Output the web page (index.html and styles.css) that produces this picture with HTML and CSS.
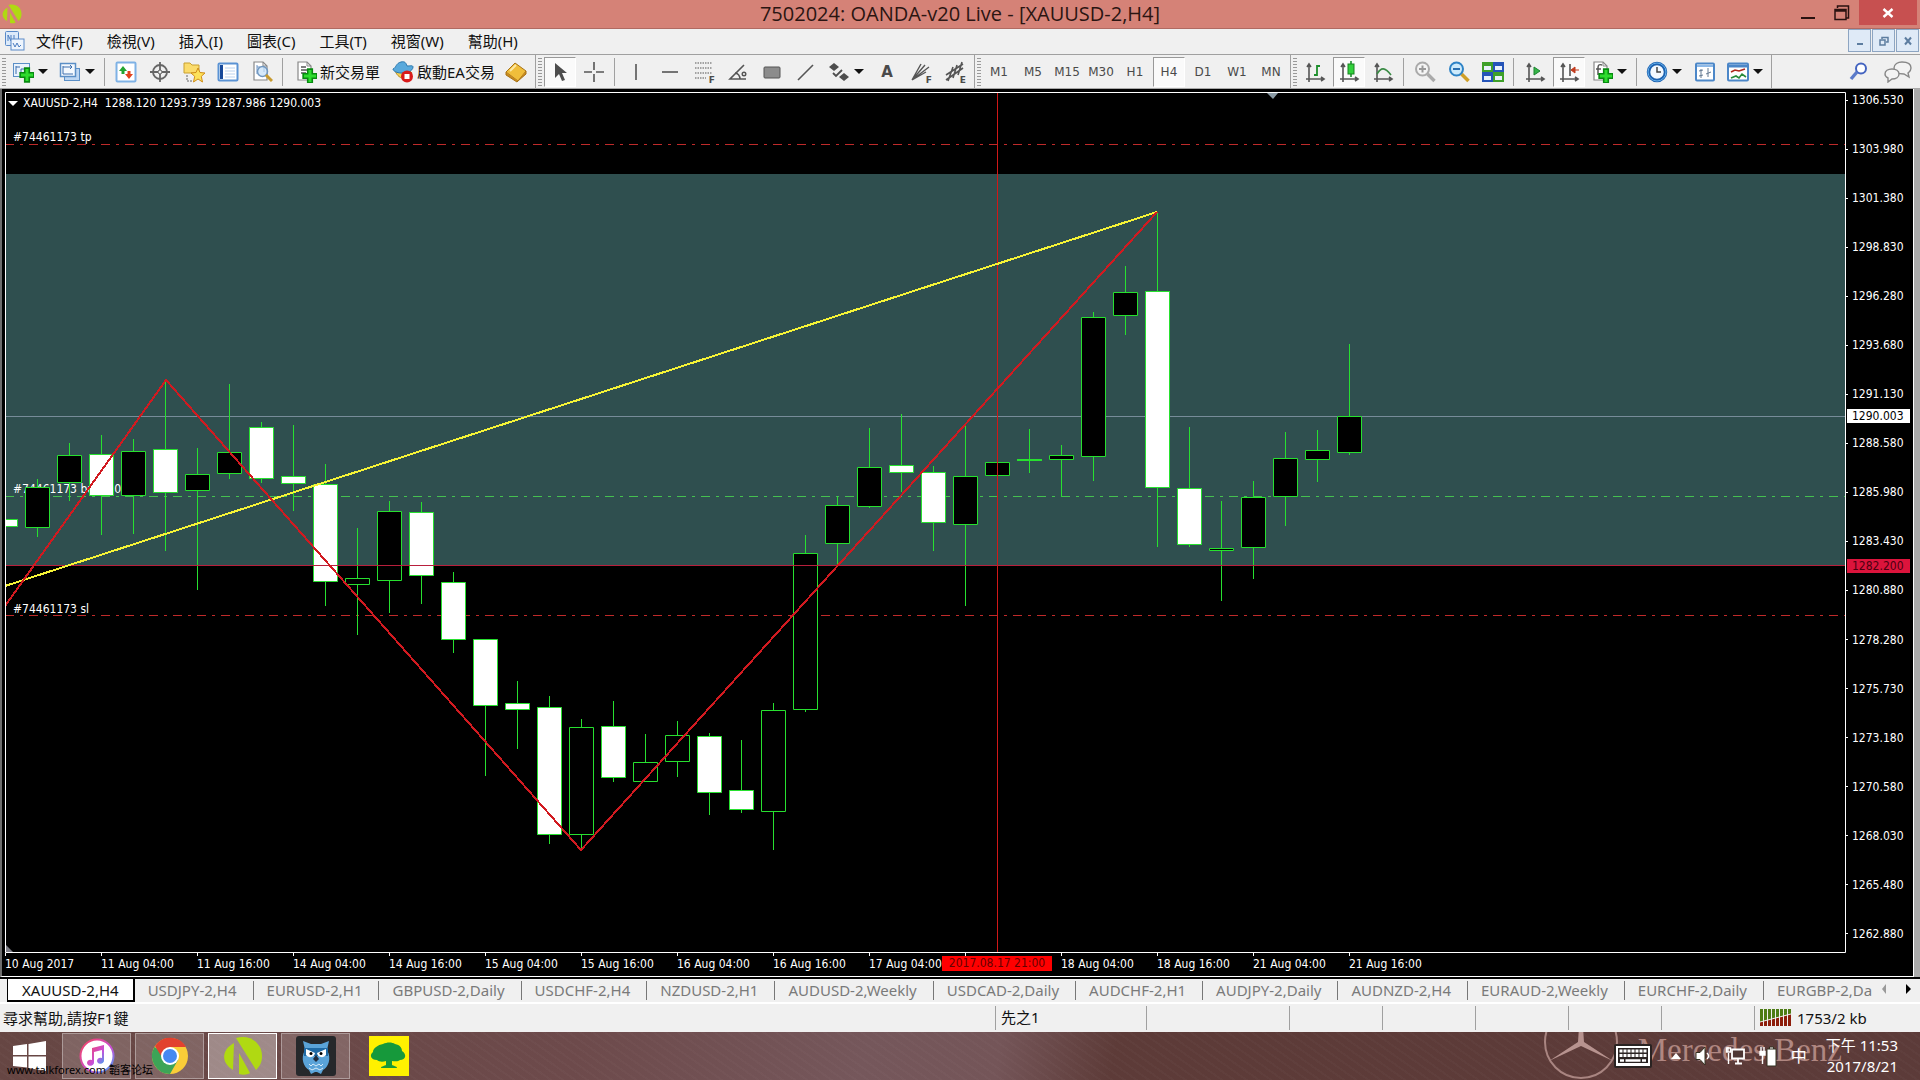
FILE: index.html
```html
<!DOCTYPE html>
<html lang="zh-Hant">
<head>
<meta charset="utf-8">
<title>7502024: OANDA-v20 Live - [XAUUSD-2,H4]</title>
<link rel="stylesheet" href="styles.css">
</head>
<body>
<svg class="defs" aria-hidden="true">
  <symbol id="n-logo" viewBox="0 0 40 40"><path d="M11 7C-2 14-2 27 10 34z" fill="#b0d912"/><path d="M13 2C27-2 39 7 39 20c0 6-2 10-6 14z" fill="#b0d912"/><path d="M16 17v21c4 1 8 1 11-1z" fill="#b0d912"/></symbol>
  <symbol id="plus" viewBox="0 0 14 14"><path d="M5 1h4v4h4v4H9v4H5V9H1V5h4z" fill="#2edc2e" stroke="#078a10" stroke-width="1.4"/></symbol>
  <symbol id="page" viewBox="0 0 22 22"><path d="M3 1h9l4 4v14H3z" fill="#fff" stroke="#888" stroke-width="1.2"/><path d="M12 1v4h4" fill="none" stroke="#888"/></symbol>
</svg>

<header class="titlebar">
  <svg class="app-logo" viewBox="0 0 40 40"><use href="#n-logo"/></svg>
  <h1 class="title">7502024: OANDA-v20 Live - [XAUUSD-2,H4]</h1>
  <div class="win-controls">
    <button class="win-btn" aria-label="最小化"><svg width="16" height="20"><path d="M1 15h14" stroke="#2a1210" stroke-width="2"/></svg></button>
    <button class="win-btn" aria-label="還原"><svg width="16" height="20"><path d="M1 6.500h11v10H1zM1 8h11M3.500 5V3h11v12H12" fill="none" stroke="#2a1210" stroke-width="1.500"/></svg></button>
    <button class="win-btn close" aria-label="關閉"><svg width="12" height="12"><path d="M1.500 2l9 8M10.500 2l-9 8" stroke="#fff" stroke-width="2.400"/></svg></button>
  </div>
</header>

<nav class="menubar">
  <svg class="menu-icon" viewBox="0 0 20 20"><rect x=".5" y=".5" width="13" height="14" rx="1" fill="#dceafa" stroke="#5a8ac8"/><path d="M3 10V4l3 6V4M9 4v6" stroke="#4a7cc0" fill="none"/><rect x="6" y="8" width="13" height="11" fill="#eef5fd" stroke="#5a8ac8"/><path d="M8 12l2 4 2-4 2 4 2-2" stroke="#4a7cc0" fill="none"/></svg>
  <button class="menu">文件(F)</button>
  <button class="menu">檢視(V)</button>
  <button class="menu">插入(I)</button>
  <button class="menu">圖表(C)</button>
  <button class="menu">工具(T)</button>
  <button class="menu">視窗(W)</button>
  <button class="menu">幫助(H)</button>
  <div class="mdi">
    <button class="mdi-btn" aria-label="最小化圖表"><svg width="12" height="12"><path d="M3 9h6" stroke="#5d7da0" stroke-width="2"/></svg></button>
    <button class="mdi-btn" aria-label="還原圖表"><svg width="12" height="12"><path d="M2 5h5v5H2zM4 4V2.500h6V7H8" fill="none" stroke="#5d7da0" stroke-width="1.500"/></svg></button>
    <button class="mdi-btn" aria-label="關閉圖表"><svg width="12" height="12"><path d="M3 2.500l6 7M9 2.500l-6 7" stroke="#5d7da0" stroke-width="2"/></svg></button>
  </div>
</nav>

<div class="toolbar">
  <div class="group">
    <i class="grip"></i>
    <button class="drop" aria-label="新圖表"><svg class="ico" viewBox="0 0 22 22"><rect x="1.500" y="2.500" width="16" height="13" fill="#eaf3fc" stroke="#5b8fc6"/><path d="M4 5v8M4 6h4M9 12v-4h4" stroke="#3c6fae" fill="none"/><use href="#plus" x="7" y="6" width="16" height="16"/></svg><i class="arr"></i></button>
    <button class="drop" aria-label="設定檔"><svg class="ico" viewBox="0 0 22 22"><rect x="5.500" y="7.500" width="15" height="12" fill="#bcd6f2" stroke="#5b8fc6"/><rect x="1.500" y="2.500" width="15" height="13" fill="#f4f9fe" stroke="#5b8fc6" stroke-width="1.500"/><path d="M4 5v8h10M4 6h9M11 4l2 2-2 2" stroke="#3c6fae" fill="none"/></svg><i class="arr"></i></button>
    <i class="sep"></i>
    <button class="tool" aria-label="市場報價"><svg class="ico" viewBox="0 0 22 22"><rect x="1.500" y="1.500" width="19" height="19" rx="1" fill="#fff" stroke="#7fb2e5" stroke-width="2"/><path d="M8 5l4 5H9.500v3h-3v-3H4z" fill="#23a531"/><path d="M14 18l-4-5h2.500v-3h3v3H18z" fill="#e2421d"/></svg></button>
    <button class="tool" aria-label="數據窗口"><svg class="ico" viewBox="0 0 22 22"><circle cx="11" cy="11" r="7" fill="none" stroke="#666" stroke-width="1.800"/><path d="M11 1v20M1 11h20" stroke="#666" stroke-width="1.800"/><circle cx="11" cy="11" r="2" fill="#f0f0f0" stroke="#666"/></svg></button>
    <button class="tool" aria-label="導航"><svg class="ico" viewBox="0 0 22 22"><path d="M1 2h6l2 2h7v8H1z" fill="#fbdc6c" stroke="#c9a031"/><path d="M4 14v6h5" stroke="#666" stroke-dasharray="2 1" fill="none"/><path d="M15 7l2 4.500 5 .5-3.700 3.300L19.500 21 15 18l-4.500 3 1.200-5.700L8 12l5-.5z" fill="#fde25a" stroke="#d08d18"/></svg></button>
    <button class="tool" aria-label="終端"><svg class="ico" viewBox="0 0 22 22"><rect x="1.500" y="2.500" width="19" height="17" rx="1" fill="#fff" stroke="#5b93d4" stroke-width="2"/><path d="M3 4h3v14H3z" fill="#17499a"/><path d="M8 7h10M8 10h10M8 13h10M8 16h10" stroke="#bcd3ee"/></svg></button>
    <button class="tool" aria-label="策略測試"><svg class="ico" viewBox="0 0 22 22"><use href="#page"/><path d="M6 4v9M6 6h3M13 5v6" stroke="#6e95c4" fill="none"/><circle cx="11.500" cy="10.500" r="5" fill="#c5dff8" fill-opacity=".7" stroke="#7097c0" stroke-width="1.500"/><path d="M15 14l6 6" stroke="#c79a2f" stroke-width="3"/></svg></button>
    <i class="sep"></i>
    <button class="wide"><svg class="ico" viewBox="0 0 22 22"><use href="#page"/><path d="M6 6h5M6 9h7M6 12h5" stroke="#555" stroke-width="1.500"/><use href="#plus" x="7" y="7" width="16" height="16"/></svg>新交易單</button>
    <button class="wide"><svg class="ico" viewBox="0 0 22 22"><path d="M3 9c2 9 13 12 17 3l-4-4z" fill="#f5cf52" stroke="#b68d24"/><path d="M1 8c3-1 3-6 8-7 4-1 5 1 6 4 3 0 6-1 6 1 0 4-7 7-12 6C5 12 1 10 1 8z" fill="#59a9dc" stroke="#2a77ad"/><circle cx="15" cy="15.500" r="6" fill="#d91b1b"/><rect x="12.500" y="13" width="5" height="5" fill="#fff"/></svg>啟動EA交易</button>
    <button class="tool" aria-label="MetaEditor"><svg class="ico" viewBox="0 0 22 22"><path d="M1 11L10 2l11 8-8 10z" fill="#f0be3b" stroke="#a87316"/><path d="M1 11v3l11 7 1-1M13 20l8-7v-3" fill="#c88a1d" stroke="#a87316"/><path d="M5 10l6-6" stroke="#fce9a6" stroke-width="2"/></svg></button>
  </div>
  <div class="group">
    <i class="grip"></i>
    <button class="tool on" aria-label="游標"><svg class="ico" viewBox="0 0 22 22"><path d="M6 2v15l4-4 3 7 3-1-3-7h5z" fill="#4d4d4d"/></svg></button>
    <button class="tool" aria-label="十字線"><svg class="ico" viewBox="0 0 22 22"><path d="M11 1v8M11 13v8M1 11h8M13 11h8" stroke="#555" stroke-width="1.600"/></svg></button>
    <i class="sep"></i>
    <button class="tool" aria-label="垂直線"><svg class="ico" viewBox="0 0 22 22"><path d="M11 3v16" stroke="#555" stroke-width="1.600"/></svg></button>
    <button class="tool" aria-label="水平線"><svg class="ico" viewBox="0 0 22 22"><path d="M3 11h16" stroke="#555" stroke-width="1.600"/></svg></button>
    <button class="tool" aria-label="斐波那契"><svg class="ico" viewBox="0 0 22 22"><path d="M2 2h17M2 7h17M2 12h17M2 17h11" stroke="#555" stroke-width="1.200" stroke-dasharray="1.500 1"/></svg><b class="sub">F</b></button>
    <button class="tool" aria-label="角度"><svg class="ico" viewBox="0 0 22 22"><path d="M17 4L3 18h16M8 12c3 0 5 3 5 6" fill="none" stroke="#555" stroke-width="1.600"/><circle cx="17" cy="13" r="1.800" fill="none" stroke="#555" stroke-width="1.400"/></svg></button>
    <button class="tool" aria-label="矩形"><svg class="ico" viewBox="0 0 22 22"><rect x="3" y="6" width="16" height="11" rx="1" fill="#8c8c8c" stroke="#555"/></svg></button>
    <button class="tool" aria-label="趨勢線"><svg class="ico" viewBox="0 0 22 22"><path d="M3 19L18 4" stroke="#555" stroke-width="1.600"/></svg></button>
    <button class="drop" aria-label="箭頭"><svg class="ico" viewBox="0 0 22 22"><path d="M6 2l5 4-5 4-5-4zM16 12l5 4-5 4-5-4z" fill="#4d4d4d"/><path d="M5 12l3 3 6-6" stroke="#4d4d4d" stroke-width="1.800" fill="none"/></svg><i class="arr"></i></button>
    <button class="tool text-a">A</button>
    <button class="tool" aria-label="斐波那契扇形"><svg class="ico" viewBox="0 0 22 22"><path d="M2 19L11 3M2 19L15 4M2 19L19 6M2 19l14-8" stroke="#555" stroke-width="1.400"/></svg><b class="sub">F</b></button>
    <button class="tool" aria-label="通道"><svg class="ico" viewBox="0 0 22 22"><path d="M2 14L19 3M2 19L19 7M4 20L9 6M9 17l4-13M14 14l4-13" stroke="#555" stroke-width="1.600"/></svg><b class="sub">E</b></button>
  </div>
  <div class="group">
    <i class="grip"></i>
    <button class="tool tf">M1</button>
    <button class="tool tf">M5</button>
    <button class="tool tf">M15</button>
    <button class="tool tf">M30</button>
    <button class="tool tf">H1</button>
    <button class="tool tf on">H4</button>
    <button class="tool tf">D1</button>
    <button class="tool tf">W1</button>
    <button class="tool tf">MN</button>
  </div>
  <div class="group">
    <i class="grip"></i>
    <button class="tool" aria-label="柱狀圖"><svg class="ico" viewBox="0 0 22 22"><path d="M5 3v18M2 18h18M3 6l2-3 2 3M17 16l3 2-3 2" fill="none" stroke="#555" stroke-width="1.600"/><path d="M13 4v11M13 5h3M10 14h3" stroke="#1c8e2b" stroke-width="1.800"/></svg></button>
    <button class="tool on" aria-label="陰陽燭"><svg class="ico" viewBox="0 0 22 22"><path d="M5 3v18M2 18h18M3 6l2-3 2 3M17 16l3 2-3 2" fill="none" stroke="#555" stroke-width="1.600"/><path d="M13 0v16" stroke="#1c8e2b" stroke-width="1.600"/><rect x="10" y="3" width="6" height="10" fill="#32d13c" stroke="#178321"/></svg></button>
    <button class="tool" aria-label="折線圖"><svg class="ico" viewBox="0 0 22 22"><path d="M5 3v18M2 18h18M3 6l2-3 2 3M17 16l3 2-3 2" fill="none" stroke="#555" stroke-width="1.600"/><path d="M5 13c4-7 8-7 14 1" fill="none" stroke="#3a8b45" stroke-width="1.600"/></svg></button>
    <i class="sep"></i>
    <button class="tool" aria-label="放大"><svg class="ico" viewBox="0 0 22 22"><circle cx="8.500" cy="8" r="6.500" fill="#f4f4f4" stroke="#aaa" stroke-width="2"/><path d="M5 8h7M8.500 4.500v7" stroke="#999" stroke-width="2"/><path d="M13.500 13l7 7" stroke="#aaa" stroke-width="3.400"/></svg></button>
    <button class="tool" aria-label="縮小"><svg class="ico" viewBox="0 0 22 22"><path d="M13.500 13l7 7" stroke="#cf9f28" stroke-width="3.600"/><circle cx="8.500" cy="8" r="6.500" fill="#cdeafb" stroke="#2e83c6" stroke-width="2"/><path d="M5 8h7" stroke="#2a6fb0" stroke-width="2"/></svg></button>
    <button class="tool" aria-label="平鋪"><svg class="ico" viewBox="0 0 22 22"><path d="M0 1h11v10H0zM11 11h11v10H11z" fill="#3fa02a"/><path d="M11 1h11v10H11zM0 11h11v10H0z" fill="#2554b8"/><path d="M2 5h7v4H2zM13 5h7v4h-7zM2 15h7v4H2zM13 15h7v4h-7z" fill="#e9f1fb"/></svg></button>
    <i class="sep"></i>
    <button class="tool" aria-label="自動滾動"><svg class="ico" viewBox="0 0 22 22"><path d="M5 3v18M2 18h18M3 6l2-3 2 3M17 16l3 2-3 2" fill="none" stroke="#555" stroke-width="1.600"/><path d="M10 6v8l6-4z" fill="#36b548" stroke="#1c8430"/></svg></button>
    <button class="tool on" aria-label="圖表平移"><svg class="ico" viewBox="0 0 22 22"><path d="M5 3v18M2 18h18M3 6l2-3 2 3M17 16l3 2-3 2M12 3v12" fill="none" stroke="#555" stroke-width="1.600"/><path d="M13 9l4-3v6zM17 9h4" fill="#c23a1c" stroke="#c23a1c"/></svg></button>
    <button class="drop" aria-label="技術指標"><svg class="ico" viewBox="0 0 22 22"><use href="#page"/><path d="M11 4c-3-1-4 0-4 3v7M5 8h5" fill="none" stroke="#555" stroke-width="1.500"/><use href="#plus" x="7" y="7" width="16" height="16"/></svg><i class="arr"></i></button>
    <i class="sep"></i>
    <button class="drop" aria-label="週期"><svg class="ico" viewBox="0 0 22 22"><circle cx="11" cy="11" r="8.500" fill="#f3f9ff" stroke="#1d62b0" stroke-width="3.500"/><circle cx="11" cy="11" r="9" fill="none" stroke="#66b1ec"/><path d="M11 6v5h4" fill="none" stroke="#444" stroke-width="1.500"/></svg><i class="arr"></i></button>
    <button class="tool" aria-label="模板"><svg class="ico" viewBox="0 0 22 22"><rect x="2" y="2.500" width="18" height="17" rx="1" fill="#fff" stroke="#4c87c8" stroke-width="2"/><path d="M3 5h16" stroke="#8db9e8" stroke-width="2"/><path d="M7 8v9M14 7v9M5 10l4-1M12 13l5-2M5 15l4-1" stroke="#657a92"/></svg></button>
    <button class="drop" aria-label="圖表模板"><svg class="ico" viewBox="0 0 22 22"><rect x="1" y="2.500" width="20" height="17" rx="1" fill="#fff" stroke="#4c87c8" stroke-width="2"/><path d="M2 5h18" stroke="#4c87c8" stroke-width="3"/><path d="M4 11l4-2 4 1 6-2" fill="none" stroke="#b0281c" stroke-width="1.600"/><path d="M4 17l5-2 3 2 3-4 4 3" fill="none" stroke="#278b3a" stroke-width="1.600"/></svg><i class="arr"></i></button>
  </div>
  <div class="tools-right">
    <button class="tool" aria-label="搜尋"><svg class="ico" viewBox="0 0 22 22"><circle cx="13" cy="7.500" r="5" fill="#fff" stroke="#4464c0" stroke-width="2"/><path d="M9 11l-6 7" stroke="#5b7bc9" stroke-width="3.400"/></svg></button>
    <button class="tool" aria-label="聊天"><svg class="chat" viewBox="0 0 28 22"><path d="M18 1c5 0 9 2 9 6 0 3-2 4-3 5l1 4-5-3c-7 0-10-2-10-6 0-4 4-6 8-6z" fill="#f3f3f3" stroke="#888" stroke-width="1.400"/><path d="M8 8c4 0 7 2 7 5s-3 5-7 5l-4 3V17c-2-1-3-2-3-4 0-3 3-5 7-5z" fill="#f3f3f3" stroke="#888" stroke-width="1.400"/></svg></button>
  </div>
</div>

<main class="chart">
  <div class="plot">
    <svg class="layer" viewBox="5 92 1841 861" preserveAspectRatio="none">
      <rect x="5" y="174" width="1841" height="391" fill="#2f4f4f"/>
      <path d="M5 416.500h1841" stroke="#778c99"/>
      <g fill="none" stroke-dasharray="9 6 3 6">
        <path d="M5 496.500h1841" stroke="#45c050"/>
        <path d="M5 144.500h1841M5 615.500h1841" stroke="#bf2a2a"/>
      </g>
    </svg>
    <span class="ohlc"><i class="arr"></i>XAUUSD-2,H4&nbsp; 1288.120 1293.739 1287.986 1290.003</span>
    <span class="order tp">#74461173 tp</span>
    <span class="order buy">#74461173 buy 1.00</span>
    <span class="order sl">#74461173 sl</span>
    <svg class="layer" viewBox="5 92 1841 861" preserveAspectRatio="none">
      <g stroke="#27e02f" fill="none">
        <path d="M5.500 458V542M37.500 479V537M69.500 443V501M101.500 435V535M133.500 439V534M165.500 381V551M197.500 448V590M229.500 384V479M261.500 422V483M293.500 425V511M325.500 464V606M357.500 528V635M389.500 501V613M421.500 502V604M453.500 572V653M485.500 639V776M517.500 681V749M549.500 696V844M581.500 719V849M613.500 701V782M645.500 734V781M677.500 721V777M709.500 733V815M741.500 740V813M773.500 703V850M805.500 535V712M837.500 497V564M869.500 428V508M901.500 414V492M933.500 466V551M965.500 426V606M1029.500 429V473M1061.500 445V497M1093.500 312V481M1125.500 266V335M1157.500 213V547M1189.500 427V547M1221.500 501V601M1253.500 481V579M1285.500 432V526M1317.500 430V482M1349.500 344V455"/>
        <path stroke-width="2" d="M1017 460h25"/>
        <path fill="#fff" d="M-6.500 519.500h24v7h-24zM89.500 454.500h24v41h-24zM153.500 449.500h24v43h-24zM249.500 427.500h24v51h-24zM281.500 476.500h24v7h-24zM313.500 484.500h24v97h-24zM409.500 512.500h24v63h-24zM441.500 582.500h24v57h-24zM473.500 639.500h24v66h-24zM505.500 703.500h24v6h-24zM537.500 707.500h24v127h-24zM601.500 726.500h24v51h-24zM697.500 736.500h24v56h-24zM729.500 790.500h24v19h-24zM889.500 465.500h24v7h-24zM921.500 472.500h24v50h-24zM1145.500 291.500h24v196h-24zM1177.500 488.500h24v56h-24z"/>
        <path fill="#000" d="M25.500 487.500h24v40h-24zM57.500 455.500h24v27h-24zM121.500 451.500h24v44h-24zM185.500 474.500h24v16h-24zM217.500 452.500h24v21h-24zM345.500 578.500h24v6h-24zM377.500 511.500h24v69h-24zM569.500 727.500h24v107h-24zM633.500 762.500h24v19h-24zM665.500 735.500h24v26h-24zM761.500 710.500h24v101h-24zM793.500 553.500h24v156h-24zM825.500 505.500h24v38h-24zM857.500 467.500h24v39h-24zM953.500 476.500h24v48h-24zM985.500 462.500h24v13h-24zM1049.500 455.500h24v4h-24zM1081.500 317.500h24v139h-24zM1113.500 292.500h24v23h-24zM1209.500 548.500h24v2h-24zM1241.500 497.500h24v50h-24zM1273.500 458.500h24v38h-24zM1305.500 450.500h24v9h-24zM1337.500 416.500h24v36h-24z"/>
      </g>
      <path d="M5 565.500h1841" stroke="#b81f3c"/>
      <path d="M997.500 93V952" stroke="#d01818"/>
      <g fill="none" stroke-width="2" shape-rendering="crispEdges">
        <path d="M5 586L1157 212" stroke="#f6f436"/>
        <path d="M5 606L166 380 581 850 1157 212" stroke="#d11a20"/>
      </g>
      <path d="M1267 93h11l-5 6z" fill="#8a9aa5"/><path d="M6 945v7h7z" fill="#7d7d85"/>
      <path d="M5.500 92.500H1845.500V952.500H5.500z" fill="none" stroke="#fff"/>
    </svg>
  </div>
  <ol class="prices">
    <li>1306.530</li><li>1303.980</li><li>1301.380</li><li>1298.830</li><li>1296.280</li><li>1293.680</li><li>1291.130</li><li>1288.580</li><li>1285.980</li><li>1283.430</li><li>1280.880</li><li>1278.280</li><li>1275.730</li><li>1273.180</li><li>1270.580</li><li>1268.030</li><li>1265.480</li><li>1262.880</li>
    <li class="tag bid">1290.003</li><li class="tag level">1282.200</li>
  </ol>
  <ol class="times">
    <li>10 Aug 2017</li><li>11 Aug 04:00</li><li>11 Aug 16:00</li><li>14 Aug 04:00</li><li>14 Aug 16:00</li><li>15 Aug 04:00</li><li>15 Aug 16:00</li><li>16 Aug 04:00</li><li>16 Aug 16:00</li><li>17 Aug 04:00</li><li><span class="cursor-time">2017.08.17 21:00</span></li><li>18 Aug 04:00</li><li>18 Aug 16:00</li><li>21 Aug 04:00</li><li>21 Aug 16:00</li>
  </ol>
</main>

<nav class="tabs">
  <div class="tab-list">
    <button class="tab active">XAUUSD-2,H4</button>
    <button class="tab">USDJPY-2,H4</button>
    <button class="tab">EURUSD-2,H1</button>
    <button class="tab">GBPUSD-2,Daily</button>
    <button class="tab">USDCHF-2,H4</button>
    <button class="tab">NZDUSD-2,H1</button>
    <button class="tab">AUDUSD-2,Weekly</button>
    <button class="tab">USDCAD-2,Daily</button>
    <button class="tab">AUDCHF-2,H1</button>
    <button class="tab">AUDJPY-2,Daily</button>
    <button class="tab">AUDNZD-2,H4</button>
    <button class="tab">EURAUD-2,Weekly</button>
    <button class="tab">EURCHF-2,Daily</button>
    <button class="tab">EURGBP-2,Da</button>
  </div>
  <button class="scroll" aria-label="向左"><svg width="8" height="12"><path d="M6 1v10L2 6z" fill="#999"/></svg></button>
  <button class="scroll" aria-label="向右"><svg width="8" height="12"><path d="M2 1v10l5-5z" fill="#000"/></svg></button>
</nav>

<footer class="status">
  <span class="hint">尋求幫助,請按F1鍵</span>
  <span class="cell c150">先之1</span>
  <span class="cell c143"></span><span class="cell"></span><span class="cell"></span><span class="cell"></span><span class="cell"></span><span class="cell"></span>
  <span class="cell traffic"><svg width="31" height="17"><path d="M0 0h31v17H0z" fill="#4d7c14"/><path d="M0 13L31 5v12H0z" fill="#8d1d0b"/><path d="M0 13L31 5" stroke="#f0f0f0"/><path d="M3.500 0v17M7.500 0v17M11.500 0v17M15.500 0v17M19.500 0v17M23.500 0v17M27.500 0v17" stroke="#f0f0f0"/></svg>1753/2 kb</span>
</footer>

<div class="taskbar">
  <button class="start" aria-label="開始"><svg width="33" height="30"><path d="M0 5l14-2v11H0zM15.500 3L33 0v14H15.500zM0 15.500h14v11L0 25zM15.500 15.500H33V30l-17.500-3z" fill="#fff"/></svg></button>
  <button class="task" aria-label="iTunes"><svg width="36" height="38" viewBox="0 0 36 38"><defs><linearGradient id="note" x2="1" y2="1"><stop stop-color="#f7415c"/><stop offset=".6" stop-color="#c84fd8"/><stop offset="1" stop-color="#38a5f2"/></linearGradient></defs><circle cx="18" cy="19" r="16.500" fill="#fff" stroke="url(#note)" stroke-width="2"/><path d="M13 11l12-3v15.500a3.500 3 0 1 1-2-2.500V13l-8 2v10.500a3.500 3 0 1 1-2-2.500z" fill="url(#note)"/></svg></button>
  <button class="task" aria-label="Chrome"><svg width="38" height="38" viewBox="0 0 38 38"><circle cx="19" cy="19" r="18" fill="#f9cd38"/><path d="M3.400 10A18 18 0 0 0 19 37l8-14-8-4z" fill="#3da457"/><path d="M4 9l8 13 7-12h16A18 18 0 0 0 4 9z" fill="#e2412f"/><circle cx="19" cy="19" r="9" fill="#fff"/><circle cx="19" cy="19" r="7" fill="#4688f1"/></svg></button>
  <button class="task current" aria-label="OANDA"><svg width="40" height="40"><use href="#n-logo"/></svg></button>
  <button class="task" aria-label="Hootsuite"><svg width="40" height="40" viewBox="0 0 40 40"><rect width="40" height="40" rx="3" fill="#26282b"/><path d="M7 5l8 3h10l8-3-2 9c5 9 1 17-4 20l-2 4-4-2h-2l-4 2-2-4C8 31 4 23 9 14z" fill="#5aa3d8"/><path d="M8 12h24v8H8z" fill="#1f6aa5"/><path d="M10 13l9 4a5 5 0 0 1-9 2zM30 13l-9 4a5 5 0 0 0 9 2z" fill="#fff"/><circle cx="15" cy="17.500" r="1.500"/><circle cx="25" cy="17.500" r="1.500"/><path d="M20 19l3 4-3 3-3-3z" fill="#222b3a"/><path d="M13 28l2 2 2-2 3 2 3-2 2 2 2-2M13 32l3 2 4-2 4 2 3-2" fill="none" stroke="#d7ebf8"/></svg></button>
  <button class="task plain" aria-label="國泰"><svg width="40" height="40" viewBox="0 0 40 40"><rect width="40" height="40" fill="#fff100"/><path d="M14 8c4-2 9-2 12 0 5 1 7 4 7 7 5 3 4 9-2 9-2 2-6 1-8 1v4c1 1 5 1 5 3H12c0-2 4-2 5-3v-4c-3 1-7 1-9-1-6 0-8-5-4-8 0-4 5-7 10-8z" fill="#16993b"/></svg></button>
  <span class="watermark">www.talkforex.com 韜客论坛</span>
  <div class="brand">
    <svg width="76" height="48" viewBox="0 0 76 48"><circle cx="38" cy="10" r="36" fill="none" stroke="#a98581" stroke-width="2"/><path d="M37-20l-2 30L6 29l32-15 32 15L41 10 39-20z" fill="#b7938f"/></svg>
    <span class="brand-name">Mercedes Benz</span>
  </div>
  <div class="tray">
    <button class="tray-btn keyboard" aria-label="觸控鍵盤"><svg width="38" height="24"><rect x="1" y="1" width="36" height="22" rx="1" fill="#fff" stroke="#2a2322" stroke-width="2"/><rect x="4" y="4" width="30" height="15" fill="#2a2322"/><path d="M5.500 7h27M5.500 11.500h27" stroke="#fff" stroke-width="3" stroke-dasharray="3 1"/><path d="M6 16.500h4M11.500 16.500h15M28 16.500h4" stroke="#fff" stroke-width="2.500"/></svg></button>
    <button class="tray-btn" aria-label="顯示隱藏圖示"><svg width="10" height="6"><path d="M0 6l5-6 5 6z" fill="#fff"/></svg></button>
    <button class="tray-btn" aria-label="音量"><svg width="16" height="20"><path d="M1 6.500h4L10 1v18l-5-5.500H1z" fill="#fff" stroke="#332"/><path d="M12 7c2 2 2 4 0 6" fill="none" stroke="#fff" stroke-width="1.500"/></svg></button>
    <button class="tray-btn" aria-label="網路"><svg width="20" height="20"><path d="M7 3.500h12v9H7zM10 17.500h7M13 13v4" fill="#4d3634" stroke="#fff" stroke-width="1.800"/><path d="M3 1v5M1.500 2h4v4h-4zM3.500 7v11" fill="none" stroke="#fff" stroke-width="1.400"/></svg></button>
    <button class="tray-btn" aria-label="電池"><svg width="18" height="22"><path d="M8 4h9v17H8zM10.500 4V2h4v2" fill="#fff" stroke="#332"/><path d="M2 2v4M5 2v4M1 6.500h5V10H1zM3.500 10v9" fill="#fff" stroke="#fff" stroke-width="1.400"/></svg></button>
    <button class="tray-btn">中</button>
    <button class="clock"><span>下午 11:53</span><span>2017/8/21</span></button>
  </div>
</div>
</body>
</html>
```
FILE: styles.css
```css
* { box-sizing: border-box; }
html, body { height: 100%; }
body {
  margin: 0;
  display: flex;
  flex-direction: column;
  overflow: hidden;
  background: #f0f0f0;
  color: #111;
  font: 15px/20px "Noto Sans", "Noto Sans CJK TC", sans-serif;
}
button {
  margin: 0;
  padding: 0;
  border: 0;
  background: none;
  color: inherit;
  font: inherit;
  white-space: nowrap;
}
svg { display: block; flex: none; }
ol { margin: 0; padding: 0; list-style: none; }
.defs { position: absolute; width: 0; height: 0; }

/* title bar */
.titlebar {
  flex: none;
  display: flex;
  justify-content: center;
  position: relative;
  height: 29px;
  background: #d58277;
  border-bottom: 1px solid #b06a62;
}
.app-logo { position: absolute; left: 2px; top: 3px; width: 20px; height: 22px; }
.title { margin: 0; font: 400 20px/28px "Open Sans", "Noto Sans", sans-serif; color: #2b1512; }
.win-controls { position: absolute; right: 3px; top: 0; display: flex; }
.win-btn { width: 34px; height: 25px; display: flex; align-items: center; justify-content: center; }
.win-btn.close { width: 58px; background: #c75050; }

/* menu */
.menubar { flex: none; display: flex; align-items: center; gap: 24px; height: 26px; padding: 0 1px 2px 5px; border-bottom: 1px solid #a0a0a0; }
.menu-icon { width: 20px; height: 20px; margin-right: -13px; }
.mdi { margin-left: auto; display: flex; gap: 1px; }
.mdi-btn { width: 23px; height: 23px; border: 1px solid #8da5c2; background: #dfeaf7; display: flex; align-items: center; justify-content: center; }

/* toolbar */
.toolbar { flex: none; display: flex; height: 34px; border-bottom: 1px solid #a8a8a8; }
.group { display: flex; align-items: center; padding: 0 2px; border-right: 1px solid #a0a0a0; }
.grip { width: 4px; height: 28px; margin-right: 1px; background: repeating-linear-gradient(#999 0 1px, #f0f0f0 1px 3px); }
.tool { position: relative; width: 32px; height: 30px; margin: 0 1px; display: flex; align-items: center; justify-content: center; }
.tool.on { background: #fafafa; border: 1px solid #fff; border-top-color: #999; border-left-color: #999; }
.ico { width: 22px; height: 22px; }
.chat { width: 28px; height: 22px; }
.drop { width: 47px; height: 30px; padding-left: 5px; display: flex; align-items: center; gap: 4px; }
.arr { border: 5px solid transparent; border-top-color: currentColor; border-bottom: 0; }
.sep { width: 1px; height: 28px; margin: 0 4px 0 3px; background: #a0a0a0; }
.wide { height: 30px; display: flex; align-items: center; gap: 3px; padding: 0 4px 0 8px; line-height: 30px; }
.tf { color: #4a4a4a; font: 12px/16px "DejaVu Sans", sans-serif; }
.text-a { color: #4a4a4a; font: bold 15px/16px "DejaVu Sans", sans-serif; }
.sub { position: absolute; right: 5px; bottom: 2px; color: #4a4a4a; background: #f0f0f0; font: bold 9px/9px "DejaVu Sans", sans-serif; }
.tools-right { margin-left: auto; display: flex; align-items: center; gap: 5px; padding-right: 5px; }

/* chart */
.chart {
  flex: 1;
  min-height: 0;
  display: grid;
  grid-template-columns: 1fr 67px;
  grid-template-rows: 1fr 23px;
  margin-right: 6px;
  padding: 3px 0 0 3px;
  background: #000;
  border-left: 2px solid #6d6d6d;
  border-right: 1px solid #fff;
  border-bottom: 1px solid #fff;
  box-shadow: 6px 0 #ababab;
  color: #fff;
  font: 12px/16px "DejaVu Sans Condensed", "DejaVu Sans", sans-serif;
}
.plot { position: relative; }
.layer { position: absolute; inset: 0; width: 100%; height: 100%; }
.ohlc, .order { position: absolute; white-space: pre; }
.ohlc { left: 3px; top: 3px; display: flex; align-items: center; gap: 5px; }
.order { left: 8px; }
.tp { top: 4%; margin-top: 3px; }
.buy { top: 45%; margin-top: 2px; }
.sl { top: 59%; margin-top: 1px; }
.prices { position: relative; display: flex; flex-direction: column; justify-content: space-between; padding: 0 0 11px; }
.prices li { display: flex; align-items: center; gap: 4px; }
.prices li::before { content: ""; width: 2px; height: 1px; background: #fff; }
.prices .tag { position: absolute; left: 1px; width: 63px; height: 14px; padding-left: 5px; }
.prices .tag::before { content: none; }
.bid { top: 317px; background: #fff; color: #000; }
.level { top: 467px; background: #dc143c; color: #4c0010; }
.times { grid-column: 1 / -1; display: flex; }
.times li { position: relative; flex: none; width: 96px; padding-top: 3px; white-space: nowrap; }
.times li::before { content: ""; position: absolute; left: 0; top: 0; width: 1px; height: 3px; background: #fff; }
.cursor-time { position: absolute; left: -23px; top: 3px; width: 110px; height: 15px; line-height: 15px; text-align: center; background: #f00; color: #600; }

/* chart tabs */
.tabs { flex: none; display: flex; height: 27px; border-top: 2px solid #000; border-bottom: 2px solid #fff; padding-left: 7px; line-height: 20px; color: #7a7a7a; }
.tab-list { flex: 1; min-width: 0; display: flex; overflow: hidden; }
.tab { position: relative; flex: none; height: 23px; padding: 0 17px 2px 13px; }
.tab::after { content: ""; position: absolute; right: 0; top: 2px; height: 19px; border-right: 1px solid #777; }
.tab.active { background: #fff; color: #111; border: 1px solid #000; border-top: 0; border-right-width: 2px; border-bottom-width: 2px; padding: 0 14px; }
.tab.active::after, .tab:last-child::after { content: none; }
.scroll { width: 24px; height: 20px; display: flex; align-items: center; justify-content: center; }

/* status bar */
.status { flex: none; display: flex; align-items: center; height: 28px; padding-bottom: 1px; }
.hint { flex: 1; padding-left: 3px; }
.cell { width: 93px; height: 24px; padding-left: 5px; line-height: 22px; border-left: 1px solid #a0a0a0; }
.c150 { width: 151px; }
.c143 { width: 143px; }
.traffic { width: 166px; display: flex; align-items: center; gap: 6px; }

/* taskbar */
.taskbar {
  flex: none;
  position: relative;
  display: flex;
  align-items: center;
  gap: 4px;
  height: 48px;
  overflow: hidden;
  background:
    repeating-linear-gradient(35deg, rgba(255, 255, 255, .02) 0 2px, transparent 2px 7px),
    linear-gradient(100deg, #664643 0, #6d4a4b 30%, #75575b 45%, #745558 52%, #5d3b38 58%, #5c3b39 100%);
}
.start { width: 58px; height: 48px; display: flex; align-items: center; justify-content: center; }
.task { width: 69px; height: 46px; display: flex; align-items: center; justify-content: center; background: rgba(255, 255, 255, .16); border: 1px solid rgba(255, 255, 255, .35); }
.task.current { background: rgba(255, 255, 255, .36); border-color: #fff; }
.task.plain { background: none; border-color: transparent; }
.watermark { position: absolute; left: 7px; bottom: 0; color: #000; font-size: 11px; line-height: 20px; }
.brand { position: absolute; right: 78px; top: 0; display: flex; align-items: flex-start; gap: 19px; }
.brand-name { color: #b08781; font: 33px/36px "Liberation Serif", serif; }
.tray { position: relative; margin-left: auto; display: flex; align-items: center; gap: 14px; padding-right: 22px; color: #fff; font-size: 16px; }
.tray-btn { display: flex; align-items: center; }
.keyboard { margin-right: 5px; }
.clock { display: flex; flex-direction: column; align-items: flex-end; margin-left: 5px; font-size: 15px; line-height: 21px; }
```
